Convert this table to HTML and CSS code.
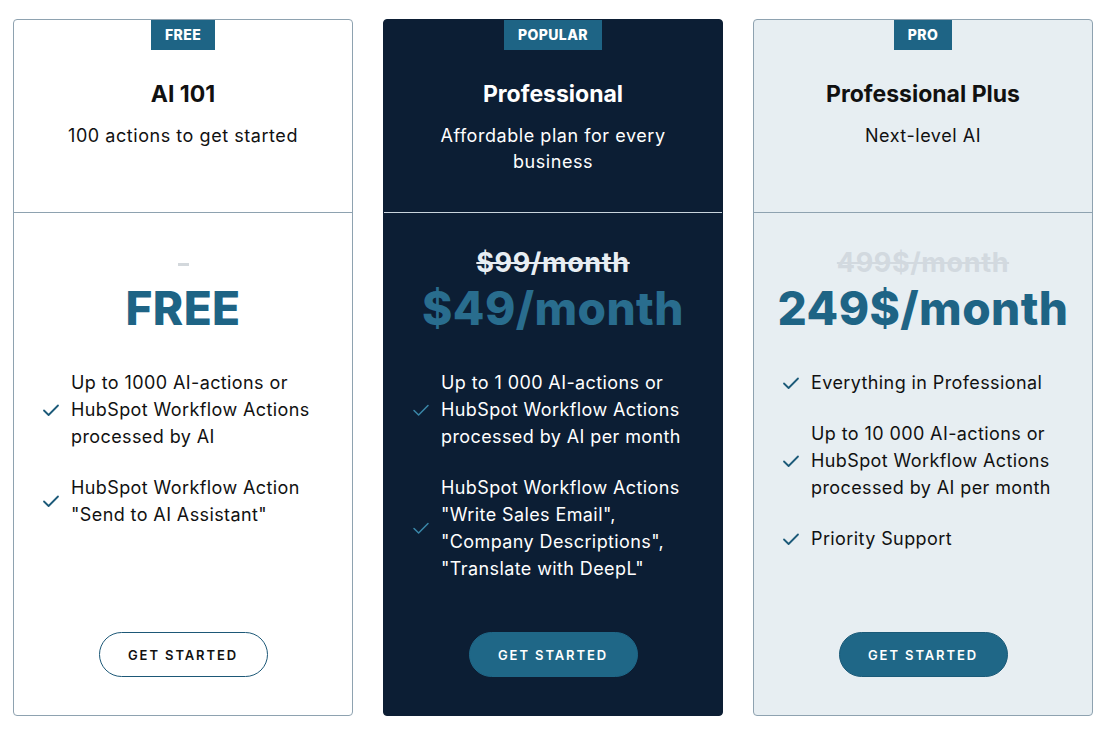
FILE: index.html
```html
<!DOCTYPE html>
<html lang="en">
<head>
<meta charset="utf-8">
<title>Pricing</title>
<link rel="stylesheet" href="styles.css">
</head>
<body>
<main class="plans">
  <section class="card card-free">
    <header class="card-head">
      <span class="badge">FREE</span>
      <h2 class="title">AI 101</h2>
      <p class="subtitle">100 actions to get started</p>
    </header>
    <div class="card-body">
      <div class="old-price"><span class="dash"></span></div>
      <div class="price">FREE</div>
      <ul class="features">
        <li><svg class="check" viewBox="0 0 18 18"><path d="M2 9.5 L6.6 14 L16 4.5"/></svg><span>Up to 1000 AI-actions or HubSpot Workflow Actions processed by AI</span></li>
        <li><svg class="check" viewBox="0 0 18 18"><path d="M2 9.5 L6.6 14 L16 4.5"/></svg><span>HubSpot Workflow Action "Send to AI Assistant"</span></li>
      </ul>
      <a class="btn btn-outline" href="#">GET STARTED</a>
    </div>
  </section>

  <section class="card card-popular">
    <header class="card-head">
      <span class="badge">POPULAR</span>
      <h2 class="title">Professional</h2>
      <p class="subtitle">Affordable plan for every business</p>
    </header>
    <div class="card-body">
      <div class="old-price"><s>$99/month</s></div>
      <div class="price">$49/month</div>
      <ul class="features">
        <li><svg class="check" viewBox="0 0 18 18"><path d="M2 9.5 L6.6 14 L16 4.5"/></svg><span>Up to 1 000 AI-actions or HubSpot Workflow Actions processed by AI per month</span></li>
        <li><svg class="check" viewBox="0 0 18 18"><path d="M2 9.5 L6.6 14 L16 4.5"/></svg><span>HubSpot Workflow Actions "Write Sales Email", "Company Descriptions", "Translate with DeepL"</span></li>
      </ul>
      <a class="btn btn-fill" href="#">GET STARTED</a>
    </div>
  </section>

  <section class="card card-pro">
    <header class="card-head">
      <span class="badge">PRO</span>
      <h2 class="title">Professional Plus</h2>
      <p class="subtitle">Next-level AI</p>
    </header>
    <div class="card-body">
      <div class="old-price"><s>499$/month</s></div>
      <div class="price">249$/month</div>
      <ul class="features">
        <li><svg class="check" viewBox="0 0 18 18"><path d="M2 9.5 L6.6 14 L16 4.5"/></svg><span>Everything in Professional</span></li>
        <li><svg class="check" viewBox="0 0 18 18"><path d="M2 9.5 L6.6 14 L16 4.5"/></svg><span>Up to 10 000 AI-actions or HubSpot Workflow Actions processed by AI per month</span></li>
        <li><svg class="check" viewBox="0 0 18 18"><path d="M2 9.5 L6.6 14 L16 4.5"/></svg><span>Priority Support</span></li>
      </ul>
      <a class="btn btn-fill" href="#">GET STARTED</a>
    </div>
  </section>
</main>
</body>
</html>
```
FILE: styles.css
```css
* { box-sizing: border-box; }

html, body {
  margin: 0;
  padding: 0;
  background: #ffffff;
}

body {
  font-family: Inter, "Noto Sans", "Liberation Sans", sans-serif;
  color: #111111;
  padding: 19px 15px 0 13px;
}

.plans {
  display: grid;
  grid-template-columns: repeat(3, 340px);
  column-gap: 30px;
}

.card {
  height: 697px;
  border: 1px solid #8ea2b0;
  border-radius: 4px;
  display: flex;
  flex-direction: column;
  background: #ffffff;
  overflow: hidden;
}

.card-popular {
  background: #0c1e34;
  border-color: #0c1e34;
  color: #ffffff;
}

.card-pro {
  background: #e7eef2;
  border-color: #8ea2b0;
}

.card-head {
  height: 194px;
  flex: 0 0 194px;
  border-bottom: 1px solid #8ea2b0;
  display: flex;
  flex-direction: column;
  align-items: center;
  text-align: center;
  margin-top: -1px;
}

.card-popular .card-head {
  border-bottom-color: #c9d4dd;
}

.badge {
  display: block;
  height: 31px;
  line-height: 31px;
  padding: 0 14px;
  background: #1e6485;
  color: #ffffff;
  font-size: 14px;
  font-weight: 800;
  letter-spacing: 0.4px;
}

.title {
  margin: 29px 0 0;
  font-size: 23px;
  line-height: 30px;
  font-weight: 700;
}

.subtitle {
  margin: 14px 0 0;
  padding: 0 36px;
  font-size: 18px;
  line-height: 26px;
  font-weight: 400;
  letter-spacing: 0.55px;
}

.card-body {
  flex: 1;
  display: flex;
  flex-direction: column;
  align-items: center;
  padding: 34px 0 38px;
}

.old-price {
  height: 32px;
  line-height: 32px;
  font-size: 27px;
  font-weight: 700;
  letter-spacing: 0.6px;
  display: flex;
  align-items: center;
  justify-content: center;
}

.old-price s {
  text-decoration-thickness: 2px;
}

.card-popular .old-price { color: #e8eef3; }
.card-pro .old-price { color: #d2d9df; }

.dash {
  display: block;
  width: 11px;
  height: 3px;
  background: #d3d8dc;
  margin-top: 2px;
}

.price {
  margin-top: 4px;
  height: 50px;
  line-height: 50px;
  font-size: 46px;
  font-weight: 800;
  color: #1e6485;
  letter-spacing: 0.4px;
}

.card-popular .price { color: #296d8e; }

.features {
  list-style: none;
  margin: 36px 0 0;
  padding: 0 26px 0 28px;
  width: 100%;
  display: flex;
  flex-direction: column;
  gap: 24px;
}

.features li {
  display: flex;
  align-items: center;
  gap: 11px;
  font-size: 18px;
  line-height: 27px;
  letter-spacing: 0.4px;
}

.features li span {
  flex: 1;
}

.check {
  width: 18px;
  height: 18px;
  flex: 0 0 18px;
  fill: none;
  stroke: #1c5a79;
  stroke-width: 1.8;
  stroke-linecap: round;
  stroke-linejoin: round;
}

.card-popular .check { stroke: #3a87a8; stroke-width: 1.5; }

.btn {
  margin-top: auto;
  display: flex;
  align-items: center;
  justify-content: center;
  width: 169px;
  height: 45px;
  border-radius: 23px;
  font-size: 13px;
  font-weight: 600;
  letter-spacing: 1.9px;
  text-decoration: none;
}

.btn-outline {
  border: 1.5px solid #1d5877;
  color: #111111;
  background: transparent;
}

.btn-fill {
  background: #1f6787;
  color: #ffffff;
  border: 1px solid #1a5a78;
}

.card-popular .btn-fill {
  border-color: #1f6787;
}
```
